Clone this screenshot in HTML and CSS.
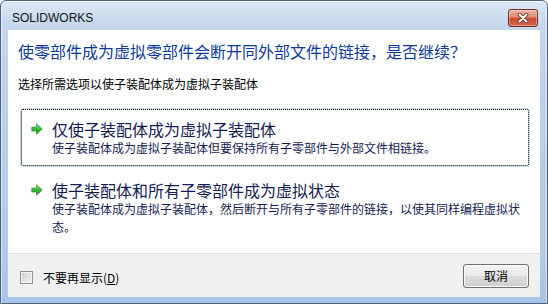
FILE: index.html
```html
<!DOCTYPE html>
<html lang="zh-CN">
<head>
<meta charset="utf-8">
<title>SOLIDWORKS</title>
<link rel="stylesheet" href="styles.css">
</head>
<body>
<div class="window">
  <div class="titlebar">
    <span class="title">SOLIDWORKS</span>
    <button class="close" aria-label="关闭">
      <svg width="12" height="10" viewBox="0 0 12 10"><path d="M2.5 1.5 L9.5 8.5 M9.5 1.5 L2.5 8.5" stroke="#6b2a1e" stroke-width="3.6" stroke-linecap="round"/><path d="M2.5 1.5 L9.5 8.5 M9.5 1.5 L2.5 8.5" stroke="#ffffff" stroke-width="2.1" stroke-linecap="round"/></svg>
    </button>
  </div>
  <div class="client">
    <div class="content">
      <h1 class="main">使零部件成为虚拟零部件会断开同外部文件的链接，是否继续？</h1>
      <p class="sub">选择所需选项以使子装配体成为虚拟子装配体</p>
      <div class="links">
        <div class="link hot">
          <svg class="arrow" viewBox="0 0 12 12"><defs><linearGradient id="ga" x1="0" y1="0" x2="0" y2="1"><stop offset="0" stop-color="#86e486"/><stop offset="0.5" stop-color="#3cb83c"/><stop offset="1" stop-color="#138a13"/></linearGradient></defs><path d="M0.8 4 H5.5 V0.8 L11.2 6 L5.5 11.2 V8 H0.8 Z" fill="url(#ga)" stroke="#2c962c" stroke-width="0.7" stroke-linejoin="round"/></svg>
          <div class="ltext">
            <div class="ltitle">仅使子装配体成为虚拟子装配体</div>
            <div class="ldesc">使子装配体成为虚拟子装配体但要保持所有子零部件与外部文件相链接。</div>
          </div>
        </div>
        <div class="link">
          <svg class="arrow" viewBox="0 0 12 12"><defs><linearGradient id="gb" x1="0" y1="0" x2="0" y2="1"><stop offset="0" stop-color="#86e486"/><stop offset="0.5" stop-color="#3cb83c"/><stop offset="1" stop-color="#138a13"/></linearGradient></defs><path d="M0.8 4 H5.5 V0.8 L11.2 6 L5.5 11.2 V8 H0.8 Z" fill="url(#gb)" stroke="#2c962c" stroke-width="0.7" stroke-linejoin="round"/></svg>
          <div class="ltext">
            <div class="ltitle">使子装配体和所有子零部件成为虚拟状态</div>
            <div class="ldesc">使子装配体成为虚拟子装配体，然后断开与所有子零部件的链接，以使其同样编程虚拟状<br>态。</div>
          </div>
        </div>
      </div>
    </div>
    <div class="footer">
      <label class="check"><span class="box"></span><span>不要再显示(<u>D</u>)</span></label>
      <button class="cancel">取消</button>
    </div>
  </div>
</div>
</body>
</html>
```

FILE: styles.css
```css
html, body {
  margin: 0;
  background: #ffffff;
}
body {
  width: 548px;
  height: 304px;
  overflow: hidden;
  font-family: "Noto Sans CJK SC", "Liberation Sans", sans-serif;
  text-spacing-trim: space-all;
}
.window {
  box-sizing: border-box;
  width: 548px;
  height: 304px;
  border: 1px solid #4e6280;
  border-radius: 6px 6px 0 0;
  background: linear-gradient(#dae6f4 0, #c4d7ee 26px, #b9d0ea 120px, #b3cbe8 250px, #a6c4e6 100%);
  box-shadow: inset 0 1px 0 rgba(255,255,255,0.75), inset 1px 0 0 rgba(255,255,255,0.5), inset -1px 0 0 rgba(255,255,255,0.5);
  display: flex;
  flex-direction: column;
}
.titlebar {
  flex: none;
  height: 29px;
  box-sizing: border-box;
  display: flex;
  justify-content: space-between;
  align-items: flex-start;
  padding: 0 9px 0 11px;
}
.title {
  font-family: "Liberation Sans", sans-serif;
  font-size: 12px;
  line-height: 23px;
  padding-top: 6px;
  color: #111111;
}
.close {
  box-sizing: border-box;
  width: 30px;
  height: 18px;
  margin-top: 8px;
  padding: 0;
  border: 1px solid #70301f;
  border-radius: 3px;
  background: linear-gradient(#eab1a3 0, #dc8b76 45%, #c84a30 52%, #d5664a 100%);
  box-shadow: inset 0 0 0 1px rgba(255,255,255,0.35);
  display: flex;
  align-items: center;
  justify-content: center;
}
.client {
  flex: 1;
  margin: 0 7px 6px 7px;
  background: #ffffff;
  display: flex;
  flex-direction: column;
  min-height: 0;
}
.content {
  flex: 1;
  padding: 10px 10px 0 10px;
}
.main {
  margin: 0;
  font-size: 16px;
  line-height: 22px;
  font-weight: normal;
  color: #0d3a9e;
}
.sub {
  margin: 14px 0 0 0;
  font-size: 12px;
  line-height: 16px;
  color: #000000;
}
.links {
  margin: 16px 0 0 2px;
  display: flex;
  flex-direction: column;
  gap: 2px;
}
.link {
  display: flex;
  align-items: flex-start;
  gap: 9px;
  padding: 10px 12px 9px 10px;
  border: 1px solid transparent;
  border-radius: 3px;
}
.link.hot {
  border-color: #c6dbef;
  outline: 1px dotted #000000;
  outline-offset: -2px;
}
.arrow {
  flex: none;
  width: 12px;
  height: 12px;
  margin-top: 4px;
}
.ltext {
  flex: 1;
  min-width: 0;
  white-space: nowrap;
}
.ltitle {
  font-size: 16px;
  line-height: 20px;
  color: #151c55;
}
.ldesc {
  font-size: 12px;
  line-height: 18px;
  color: #151c55;
}
.footer {
  flex: none;
  height: 44px;
  box-sizing: border-box;
  border-top: 1px solid #dfdfdf;
  background: #f0f0f0;
  display: flex;
  align-items: center;
  padding: 0 11px 0 12px;
}
.check {
  display: flex;
  align-items: center;
  gap: 10px;
  font-size: 12px;
  color: #000000;
  margin-top: 3px;
}
.box {
  box-sizing: border-box;
  width: 13px;
  height: 13px;
  border: 1px solid #8e8f8f;
  background: linear-gradient(135deg, #c9cdd3, #f4f4f4);
  box-shadow: inset 0 0 0 1px #f6f6f6;
}
.cancel {
  margin-left: auto;
  box-sizing: border-box;
  width: 66px;
  height: 24px;
  padding: 0;
  border: 1px solid #707070;
  border-radius: 3px;
  background: linear-gradient(#f2f2f2 0, #ebebeb 50%, #dddddd 50%, #cfcfcf 100%);
  box-shadow: inset 0 0 0 1px #fbfbfb;
  font-family: "Noto Sans CJK SC", "Liberation Sans", sans-serif;
  font-size: 12px;
  color: #000000;
}
```
